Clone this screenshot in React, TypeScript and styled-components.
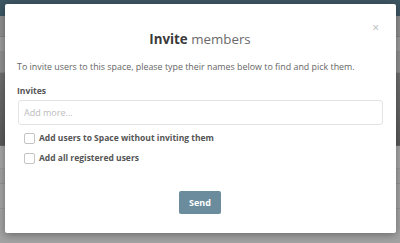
import styled, { createGlobalStyle } from 'styled-components';

const GlobalStyle = createGlobalStyle`
  html, body {
    margin: 0;
    padding: 0;
    width: 400px;
    height: 243px;
    overflow: hidden;
    font-family: "Open Sans", "DejaVu Sans", sans-serif;
  }
`;

const Page = styled.div`
  position: relative;
  width: 400px;
  height: 243px;
  display: flex;
  flex-direction: column;
  background: #a3a3a3;
`;

const TopBar = styled.div`
  height: 16px;
  background: #3d5763;
`;

const Band = styled.div<{ $h: number; $bg: string }>`
  height: ${p => p.$h}px;
  background: ${p => p.$bg};
  border-bottom: 1px solid rgba(0, 0, 0, 0.08);
`;

const Modal = styled.div`
  position: absolute;
  left: 5px;
  top: 4px;
  width: 391px;
  height: 229px;
  box-sizing: border-box;
  background: #fff;
  border-radius: 2px;
  box-shadow: 0 2px 8px rgba(0, 0, 0, 0.35);
  padding: 26px 13px 0 12px;
  display: flex;
  flex-direction: column;
`;

const Close = styled.span`
  position: absolute;
  right: 17px;
  top: 18px;
  font-size: 12px;
  line-height: 12px;
  color: #b8b8b8;
`;

const Title = styled.h2`
  margin: 0;
  text-align: center;
  font-size: 13.3px;
  line-height: 18px;
  font-weight: 400;
  color: #6a6a6a;
  b {
    font-weight: 700;
    color: #3a3a3a;
  }
`;

const Intro = styled.p`
  margin: 13px 0 0;
  font-size: 8.9px;
  line-height: 12px;
  color: #666;
`;

const Label = styled.div`
  margin-top: 12px;
  font-size: 8.6px;
  line-height: 12px;
  font-weight: 700;
  color: #555;
`;

const Input = styled.input`
  margin: 3px 0 0 1px;
  height: 25px;
  box-sizing: border-box;
  border: 1px solid #e3e3e3;
  border-radius: 3px;
  padding: 0 5px;
  font-family: inherit;
  font-size: 9px;
  color: #555;
  outline: none;
  &::placeholder {
    color: #bcbcbc;
  }
`;

const Checks = styled.div`
  margin-top: 7px;
  padding-left: 7px;
  display: flex;
  flex-direction: column;
  gap: 8px;
`;

const CheckRow = styled.label`
  height: 12px;
  display: flex;
  align-items: center;
  gap: 4px;
  font-size: 8.5px;
  line-height: 12px;
  font-weight: 700;
  color: #555;
`;

const Box = styled.span`
  width: 9px;
  height: 9px;
  border: 1px solid #c4c4c4;
  border-radius: 2px;
  background: #fff;
`;

const Footer = styled.div`
  margin-top: 27px;
  display: flex;
  justify-content: center;
`;

const SendButton = styled.button`
  width: 42px;
  height: 23px;
  border: none;
  border-radius: 2px;
  background: #6a8c9c;
  color: #fff;
  font-family: inherit;
  font-size: 9px;
  font-weight: 700;
  padding: 0;
`;

export default function App() {
  return (
    <Page>
      <GlobalStyle />
      <TopBar />
      <Band $h={20} $bg="#8e8e8e" />
      <Band $h={14} $bg="#9b9b9b" />
      <Band $h={20} $bg="#909090" />
      <Band $h={72} $bg="linear-gradient(#6f6f6f, #595959)" />
      <Band $h={22} $bg="#a6a6a6" />
      <Band $h={14} $bg="#a1a1a1" />
      <Band $h={24} $bg="#a4a4a4" />
      <Modal>
        <Close>×</Close>
        <Title>
          <b>Invite</b> members
        </Title>
        <Intro>To invite users to this space, please type their names below to find and pick them.</Intro>
        <Label>Invites</Label>
        <Input placeholder="Add more..." />
        <Checks>
          <CheckRow>
            <Box />
            Add users to Space without inviting them
          </CheckRow>
          <CheckRow>
            <Box />
            Add all registered users
          </CheckRow>
        </Checks>
        <Footer>
          <SendButton>Send</SendButton>
        </Footer>
      </Modal>
    </Page>
  );
}
